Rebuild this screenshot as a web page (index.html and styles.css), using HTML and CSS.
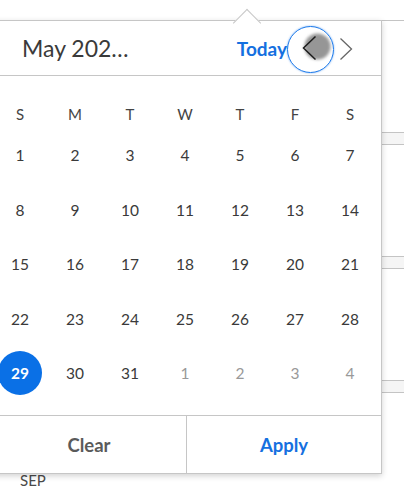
FILE: index.html
```html
<!DOCTYPE html>
<html>
<head>
<meta charset="utf-8">
<link rel="stylesheet" href="styles.css">
</head>
<body>
<div class="page">
  <div class="gap"></div>
  <div class="band"></div>
  <div class="gap"></div>
  <div class="band"></div>
  <div class="gap"></div>
  <div class="band"></div>
  <div class="month-label">SEP</div>
</div>

<div class="popup">
  <div class="caret"></div>
  <div class="header">
    <div class="title">May 202…</div>
    <div class="today">Today</div>
    <button class="nav prev" aria-label="Previous month">
      <svg width="47" height="47" viewBox="0 0 47 47">
        <defs>
          <filter id="soft" x="-50%" y="-50%" width="200%" height="200%">
            <feGaussianBlur stdDeviation="1.8"/>
          </filter>
        </defs>
        <circle cx="30.5" cy="20.5" r="13" fill="#969696" filter="url(#soft)"/>
        <polyline points="28.5,10.5 16.5,22 28.5,33.5" fill="none" stroke="#1c1c1c" stroke-width="1.5"/>
      </svg>
    </button>
    <button class="nav next" aria-label="Next month">
      <svg width="14" height="24" viewBox="0 0 14 24">
        <polyline points="1.5,1.5 12.5,12 1.5,22.5" fill="none" stroke="#666" stroke-width="1.3"/>
      </svg>
    </button>
  </div>
  <div class="grid">
    <div class="dow">S</div><div class="dow">M</div><div class="dow">T</div><div class="dow">W</div><div class="dow">T</div><div class="dow">F</div><div class="dow">S</div>
    <div class="day">1</div><div class="day">2</div><div class="day">3</div><div class="day">4</div><div class="day">5</div><div class="day">6</div><div class="day">7</div>
    <div class="day">8</div><div class="day">9</div><div class="day">10</div><div class="day">11</div><div class="day">12</div><div class="day">13</div><div class="day">14</div>
    <div class="day">15</div><div class="day">16</div><div class="day">17</div><div class="day">18</div><div class="day">19</div><div class="day">20</div><div class="day">21</div>
    <div class="day">22</div><div class="day">23</div><div class="day">24</div><div class="day">25</div><div class="day">26</div><div class="day">27</div><div class="day">28</div>
    <div class="day"><span class="selected">29</span></div><div class="day">30</div><div class="day">31</div><div class="day other">1</div><div class="day other">2</div><div class="day other">3</div><div class="day other">4</div>
  </div>
  <div class="footer">
    <button class="action clear">Clear</button>
    <button class="action apply">Apply</button>
  </div>
</div>
</body>
</html>
```
FILE: styles.css
```css
* { box-sizing: border-box; }
html, body {
  margin: 0;
  padding: 0;
  background: #fff;
  width: 404px;
  height: 503px;
  overflow: hidden;
  font-family: "Lato", "Open Sans", sans-serif;
}

.page {
  padding-top: 20px;
  position: relative;
}
.page::before {
  content: "";
  display: block;
  border-top: 1px solid #c4c4c4;
}
.gap { height: 111px; }
.band {
  height: 13px;
  background: #f5f5f5;
  border-top: 1px solid #c4c4c4;
  border-bottom: 1px solid #c4c4c4;
}
.month-label {
  margin-top: 78px;
  padding-left: 20px;
  font-size: 15px;
  color: #4a4a4a;
}

.popup {
  position: absolute;
  left: -9px;
  top: 20px;
  width: 391px;
  height: 454px;
  background: #fff;
  border: 1px solid #c6c6c6;
  box-shadow: 0 2px 6px rgba(0,0,0,0.18);
  display: flex;
  flex-direction: column;
}
.caret {
  position: absolute;
  left: 245px;
  top: -8px;
  width: 20px;
  height: 20px;
  background: #fff;
  border-left: 1px solid #c6c6c6;
  border-top: 1px solid #c6c6c6;
  transform: rotate(45deg);
}

.header {
  position: relative;
  height: 55px;
  border-bottom: 1px solid #c6c6c6;
  display: flex;
  align-items: center;
  padding-left: 30px;
}
.title {
  font-size: 23px;
  color: #3a3a3a;
  flex: 1;
  margin-top: -1px;
}
.today {
  font-size: 19px;
  font-weight: 700;
  color: #1570e0;
}
.nav {
  border: 0;
  background: none;
  padding: 0;
  display: flex;
}
.prev {
  width: 47px;
  height: 47px;
  border-radius: 50%;
  border: 1.5px solid #1877ea;
  box-shadow: 0 0 2px rgba(24,119,234,0.6);
  margin-top: 2px;
  overflow: hidden;
  align-items: center;
  justify-content: center;
}
.prev svg { margin: -1.5px; }
.next {
  margin-left: 5px;
  margin-right: 28px;
  margin-top: 1px;
}

.grid {
  display: grid;
  grid-template-columns: repeat(7, 55px);
  grid-template-rows: 28px repeat(5, 54.5px);
  padding: 24px 0 0 0.5px;
  height: 339px;
}
.dow, .day {
  display: flex;
  align-items: center;
  justify-content: center;
  font-size: 15px;
  color: #444;
}
.day { font-size: 15.5px; color: #3a3a3a; }
.day.other { color: #999; }
.selected {
  width: 44px;
  height: 44px;
  border-radius: 50%;
  background: #0a70e6;
  color: #fff;
  font-weight: 700;
  display: flex;
  align-items: center;
  justify-content: center;
}

.footer {
  border-top: 1px solid #c6c6c6;
  display: flex;
  flex: 1;
}
.action {
  flex: 1;
  border: 0;
  background: none;
  font-family: inherit;
  font-size: 18.5px;
  font-weight: 700;
  padding: 0;
}
.clear {
  color: #5a5a5a;
  border-right: 1px solid #c6c6c6;
}
.apply { color: #1570e0; }
```
